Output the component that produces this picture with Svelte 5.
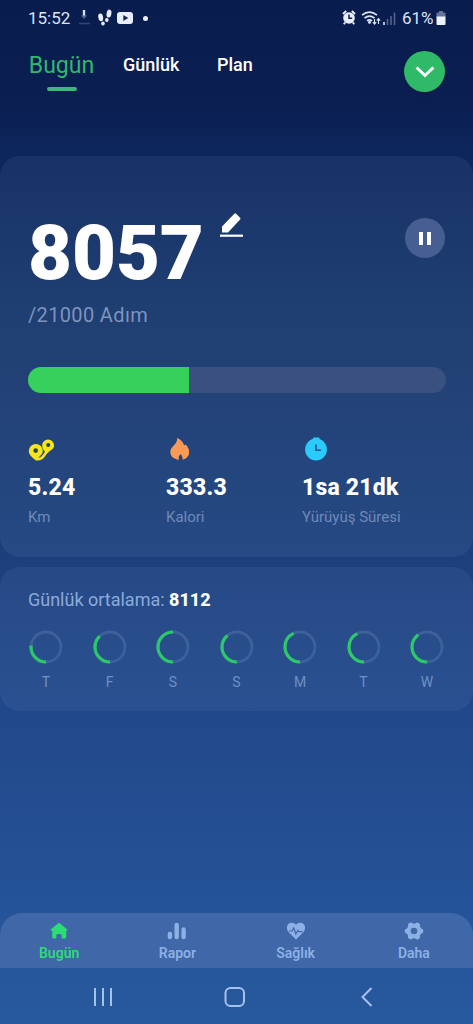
<script>
  const steps = 8057;
  const progress = 38.4;

  const stats = [
    { icon: 'route', value: '5.24', label: 'Km' },
    { icon: 'flame', value: '333.3', label: 'Kalori' },
    { icon: 'clock', value: '1sa 21dk', label: 'Yürüyüş Süresi' }
  ];

  // share of the ring that is filled, starting from the bottom
  const days = [
    { name: 'T', done: 0.265 },
    { name: 'F', done: 0.38 },
    { name: 'S', done: 0.5 },
    { name: 'S', done: 0.39 },
    { name: 'M', done: 0.43 },
    { name: 'T', done: 0.425 },
    { name: 'W', done: 0.4 }
  ];

  const menu = [
    { icon: 'home', label: 'Bugün' },
    { icon: 'report', label: 'Rapor' },
    { icon: 'health', label: 'Sağlık' },
    { icon: 'more', label: 'Daha' }
  ];

  let active = $state('Bugün');
</script>

<div class="screen">
  <div class="status-bar">
    <span class="time">15:52</span>
    <svg class="notifications" width="66" height="20" viewBox="0 0 66 20">
      <path d="M6 2v6" stroke="#d5def2" stroke-width="2.4" />
      <path d="M2.8 7.5h6.4L6 11z" fill="#53658f" />
      <path d="M1 15.5h11" stroke="#34466f" stroke-width="1.6" />
      <g fill="#e8eefb">
        <ellipse cx="22.7" cy="9.4" rx="2.4" ry="3.9" transform="rotate(-10 22.7 9.4)" />
        <ellipse cx="25" cy="15.6" rx="1.8" ry="2" />
        <ellipse cx="31" cy="5.6" rx="2.4" ry="4" transform="rotate(10 31 5.6)" />
        <ellipse cx="28.8" cy="12" rx="1.8" ry="2" />
        <rect x="39" y="4" width="16" height="12" rx="3" />
      </g>
      <path d="M45.3 7v6l5-3z" fill="#16264f" />
    </svg>
    <span class="dot"></span>
    <svg class="signals" width="56" height="20" viewBox="0 0 56 20">
      <circle cx="7" cy="10" r="5.8" fill="#e8eefb" />
      <path d="M1 6l3.200-3M13 6L9.800 3M3.300 14.300l-1.500 2M10.700 14.300l1.500 2" stroke="#e8eefb" stroke-width="1.900" />
      <path d="M7 6.500v3.800h3.200" fill="none" stroke="#0b1d4e" stroke-width="1.500" />
      <g fill="none" stroke="#dce5f8" stroke-width="1.700">
        <path d="M20 7.200q7.500-6.200 15 0" />
        <path d="M22.500 10.200q5-4.300 10 0" />
        <path d="M25 12.900q2.500-2 5 0" />
      </g>
      <circle cx="27.500" cy="14.300" r="1.500" fill="#dce5f8" />
      <path d="M32.500 11v5M30.800 14.200l1.700 2 1.700-2M36.500 16v-5M34.800 12.600l1.700-2 1.700 2" fill="none" stroke="#dce5f8" stroke-width="1.100" />
      <path d="M42 14v3" stroke="#dce5f8" stroke-width="1.600" />
      <path d="M45.500 11v6M49 8v9M52.500 4.500V17" stroke="#51618c" stroke-width="1.600" />
    </svg>
    <span class="battery">61%</span>
    <svg class="battery-icon" width="10" height="16" viewBox="0 0 10 16">
      <path d="M3 1h4v1.500h1.500a1 1 0 0 1 1 1V7h-9V3.500a1 1 0 0 1 1-1H3z" fill="#66749c" />
      <path d="M.5 6.500h9V14a1 1 0 0 1-1 1h-7a1 1 0 0 1-1-1z" fill="#edf2fd" />
    </svg>
  </div>

  <header class="tabs">
    <button class="tab tab-active">Bugün</button>
    <button class="tab tab-daily">Günlük</button>
    <button class="tab tab-plan">Plan</button>
    <button class="expand" aria-label="Aç">
      <svg width="20" height="14" viewBox="0 0 20 14">
        <path d="M1.600 2.500l8.400 8 8.400-8" fill="none" stroke="#fff" stroke-width="3" />
      </svg>
    </button>
  </header>

  <section class="card steps-card">
    <div class="steps-row">
      <span class="steps">{steps}</span>
      <svg class="edit" width="25" height="26" viewBox="0 0 25 26">
        <path d="M3 14.500L15.300 1.800q.9-.9 1.800 0l4 4q.9.900 0 1.800L9 20.500H3z" fill="#fff" />
        <path d="M1 23.700h23" stroke="#fff" stroke-width="2.200" />
      </svg>
      <button class="pause" aria-label="Duraklat"><i></i><i></i></button>
    </div>
    <div class="goal">/21000 Adım</div>
    <div class="progress"><div class="progress-fill" style="width: {progress}%"></div></div>
    <div class="stats">
      {#each stats as stat}
        <div class="stat">
          <svg width="28" height="24" viewBox="0 0 28 24">
            {#if stat.icon === 'route'}
              <path d="M7.500 22q6 .8 8.500-3.500 1.500-2.500 4-5" fill="none" stroke="#f5e126" stroke-width="2.600" />
              <path d="M7.800 23.200C4.500 20.500.8 18 .8 14a7 7 0 0 1 14 0c0 3.500-3.500 5.500-7 9.200z" fill="#f9e414" />
              <path d="M18.500 16.500c-2-2.200-4.400-4.500-4.400-8a6 6 0 0 1 12 0c0 3.500-3.800 5-7.600 8z" fill="#f9e414" />
              <circle cx="7.700" cy="13.600" r="2.300" fill="#24406b" />
              <circle cx="20.200" cy="7.900" r="2" fill="#24406b" />
            {:else if stat.icon === 'flame'}
              <path d="M11.200.8c4 2 6.300 4.700 6.900 7.700L19.700 7.500c1.800 2 3.500 4.500 3.500 7.500 0 4-2.800 7-6.700 7.700.3-2.400-.4-4.200-2-5.500-1.600 1.300-2.200 3-1.600 5.500C7.500 22.200 4.300 19 4.300 15c0-5.500 7.700-7.500 6.900-14.200z" fill="#fb9a55" />
            {:else}
              <rect x="11" y="0.500" width="6.500" height="5" rx="1" fill="#2acbfb" />
              <circle cx="14" cy="12.500" r="10.900" fill="#2acbfb" />
              <path d="M14 7.600v5.500h5" fill="none" stroke="#22659e" stroke-width="1.900" />
            {/if}
          </svg>
          <div class="stat-value">{stat.value}</div>
          <div class="stat-label">{stat.label}</div>
        </div>
      {/each}
    </div>
  </section>

  <section class="card average-card">
    <div class="average">Günlük ortalama: <b>8112</b></div>
    <div class="days">
      {#each days as day}
        <div class="day">
          <svg width="34" height="34" viewBox="0 0 34 34">
            <circle cx="17" cy="17" r="15" fill="none" stroke="#3e619b" stroke-width="2.800" />
            <circle
              cx="17" cy="17" r="15" fill="none" stroke="#2dc968" stroke-width="3.200"
              pathLength="1" stroke-dasharray="{day.done} 1" transform="rotate(90 17 17)"
            />
          </svg>
          <span>{day.name}</span>
        </div>
      {/each}
    </div>
  </section>

  <nav class="menu">
    {#each menu as item}
      <button class="menu-item" class:current={active === item.label} onclick={() => (active = item.label)}>
        <svg width="20" height="18" viewBox="0 0 20 18">
          {#if item.icon === 'home'}
            <path d="M9.200 1.300q.8-.6 1.600 0l7.200 6q.8.900-.2 1.500h-.6V15q0 1.500-1.500 1.500h-3V13.500q0-1.500-1.200-1.500h-3q-1.200 0-1.200 1.500v3h-2Q3.200 16.500 3.200 15V8.800H2.200q-1-.6-.2-1.500z" fill="currentColor" />
          {:else if item.icon === 'report'}
            <path d="M2.900 12v3M9.700 3V15M16.600 7.500V15" stroke="currentColor" stroke-width="4.400" stroke-linecap="round" />
          {:else if item.icon === 'health'}
            <path d="M10 17.500L2.500 10C-.5 6.500 1 .7 5.500.7c2 0 3.500.8 4.500 2 1-1.200 2.500-2 4.500-2 4.500 0 6 5.800 3 9.300z" fill="currentColor" />
            <path d="M3 9h3l1.700-3 2.200 6 2-3.700 1 1.400H16.500" fill="none" stroke="#4168a6" stroke-width="1.200" />
          {:else}
            <g fill="currentColor">
              <circle cx="10" cy="9" r="7.500" />
              {#each [0, 60, 120, 180, 240, 300] as angle}
                <circle cx="16.700" cy="9" r="2.600" transform="rotate({angle} 10 9)" />
              {/each}
            </g>
            <circle cx="10" cy="9" r="3.300" fill="#4067a7" />
          {/if}
        </svg>
        <span>{item.label}</span>
      </button>
    {/each}
  </nav>

  <div class="system-bar">
    <svg width="20" height="20" viewBox="0 0 20 20">
      <path d="M2 1v18M10 1v18M18 1v18" stroke="#a5c2ec" stroke-width="2" />
    </svg>
    <svg width="22" height="22" viewBox="0 0 22 22">
      <rect x="1.500" y="2" width="18.500" height="18" rx="5" fill="none" stroke="#a5c2ec" stroke-width="2" />
    </svg>
    <svg width="20" height="20" viewBox="0 0 20 20">
      <path d="M14.500 1L5.500 10l9 9" fill="none" stroke="#a5c2ec" stroke-width="2" />
    </svg>
  </div>
</div>

<style>
  :global(body) {
    margin: 0;
  }

  .screen {
    display: flex;
    flex-direction: column;
    box-sizing: border-box;
    width: 473px;
    height: 1024px;
    overflow: hidden;
    font-family: Roboto, sans-serif;
    color: #fff;
    background: linear-gradient(#081c4d 0, #0b1f53 110px, #0d275c 155px, #153568 330px, #1c407c 562px, #21488a 715px, #255397 900px, #27599d 1024px);
  }

  button {
    border: 0;
    padding: 0;
    background: none;
    color: inherit;
    font: inherit;
  }

  svg {
    display: block;
    flex: none;
  }

  .status-bar {
    display: flex;
    align-items: center;
    height: 36px;
    padding: 0 27px 0 28px;
    color: #d9e4fa;
    font-size: 17px;
  }

  .time {
    width: 50px;
  }

  .dot {
    width: 5px;
    height: 5px;
    border-radius: 50%;
    background: #e8eefb;
    margin-left: -1px;
  }

  .signals {
    margin-left: auto;
    margin-right: 4px;
  }

  .battery {
    width: 33px;
  }

  .battery-icon {
    margin-left: 1px;
  }

  .tabs {
    display: flex;
    align-items: flex-start;
    height: 120px;
    padding: 0 28px 0 29px;
  }

  .tab {
    margin-top: 18px;
    height: 22px;
    line-height: 22px;
    font-size: 18px;
    font-weight: 500;
    text-align: left;
  }

  .tab-active {
    display: flex;
    flex-direction: column;
    align-items: center;
    width: 65px;
    height: 38px;
    margin-top: 19px;
    font-size: 23px;
    font-weight: 450;
    color: #30b76c;
  }

  .tab-active::after {
    content: '';
    width: 30px;
    height: 4px;
    margin-top: 10px;
    border-radius: 2px;
    background: #3cb878;
  }

  .tab-daily {
    margin-left: 29px;
    width: 94px;
  }

  .expand {
    display: grid;
    place-items: center;
    width: 41px;
    height: 41px;
    margin: 15px 0 0 auto;
    border-radius: 50%;
    background: #2fba68;
    box-shadow: 0 1px 4px rgba(0, 0, 0, 0.2);
  }

  .card {
    box-sizing: border-box;
    border-radius: 20px;
    padding: 0 27px 0 28px;
    background: rgba(170, 195, 240, 0.08);
  }

  .steps-card {
    height: 401px;
    margin-bottom: 10px;
    padding-top: 55px;
  }

  .steps-row {
    display: flex;
    height: 84px;
  }

  .steps {
    line-height: 84px;
    font-size: 76px;
    font-weight: 900;
    letter-spacing: -0.100px;
    width: 175px;
  }

  .edit {
    margin: 1px 0 0 16px;
  }

  .pause {
    display: flex;
    align-items: center;
    justify-content: center;
    gap: 4px;
    width: 40px;
    height: 40px;
    margin: 7px 1px 0 auto;
    border-radius: 50%;
    background: #475e92;
  }

  .pause i {
    width: 4px;
    height: 13px;
    background: #fff;
  }

  .goal {
    margin-top: 7px;
    height: 26px;
    line-height: 26px;
    font-size: 20px;
    letter-spacing: 0.350px;
    color: #7d93c0;
  }

  .progress {
    height: 26px;
    margin-top: 39px;
    overflow: hidden;
    border-radius: 13px;
    background: #3a507f;
  }

  .progress-fill {
    height: 100%;
    background: #36d05c;
  }

  .stats {
    display: grid;
    grid-template-columns: 138px 136px 1fr;
    margin-top: 44px;
  }

  .stat-value {
    margin-top: 13px;
    line-height: 28px;
    font-size: 23px;
    font-weight: 800;
    letter-spacing: 0.200px;
  }

  .stat-label {
    margin-top: 5px;
    line-height: 20px;
    font-size: 15px;
    color: #7189b9;
  }

  .average-card {
    height: 144px;
    padding-top: 21px;
  }

  .average {
    line-height: 24px;
    font-size: 18px;
    color: #8daada;
  }

  .average b {
    color: #fff;
    font-weight: 800;
  }

  .days {
    display: flex;
    justify-content: space-between;
    margin-top: 18px;
    padding: 0 2px 0 1px;
  }

  .day {
    display: flex;
    flex-direction: column;
    align-items: center;
    gap: 9px;
    line-height: 18px;
    font-size: 14px;
    color: #6e8fc4;
  }

  .menu {
    display: grid;
    grid-template-columns: repeat(4, 1fr);
    height: 55px;
    margin-top: auto;
    border-radius: 22px 22px 0 0;
    background: #4067a7;
  }

  .menu-item {
    display: flex;
    flex-direction: column;
    align-items: center;
    padding-top: 9px;
    gap: 4px;
    line-height: 18px;
    font-size: 14px;
    font-weight: 600;
    color: #8db0e5;
  }

  .menu-item.current {
    color: #2ddc76;
  }

  .system-bar {
    display: grid;
    grid-template-columns: 205px 59px 205px;
    align-items: center;
    justify-items: center;
    height: 56px;
    padding-top: 2px;
    box-sizing: border-box;
  }
</style>
